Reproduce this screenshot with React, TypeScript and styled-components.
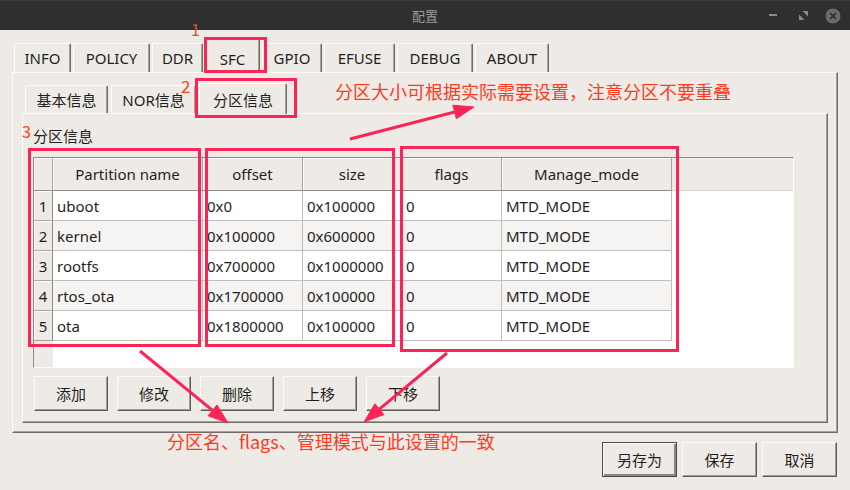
import styled, { createGlobalStyle } from 'styled-components';

const GlobalStyle = createGlobalStyle`
  html, body {
    margin: 0;
    padding: 0;
  }
  body {
    background: #eeebe6;
    font-family: "Noto Sans", "Noto Sans CJK SC", sans-serif;
    font-size: 15px;
    color: #1f1f1f;
  }
`;

const Window = styled.div`
  position: relative;
  width: 850px;
  height: 490px;
  display: flex;
  flex-direction: column;
  overflow: hidden;
  background: #eeebe6;
`;

const TitleBar = styled.div`
  flex: none;
  height: 30px;
  box-sizing: border-box;
  background: #2f2f2f;
  border-top: 1px solid #3a3a3a;
  display: grid;
  grid-template-columns: 1fr auto 1fr;
  align-items: center;
`;

const Title = styled.div`
  grid-column: 2;
  color: #9b9b9b;
  font-size: 13px;
  font-family: "Noto Sans CJK SC", sans-serif;
`;

const Controls = styled.div`
  justify-self: end;
  display: flex;
  padding-right: 2px;
`;

const ControlSlot = styled.div`
  width: 30px;
  height: 29px;
  display: flex;
  align-items: center;
  justify-content: center;
`;

const TabBar = styled.div`
  flex: none;
  margin-top: 8px;
  padding-left: 14px;
  height: 34px;
  display: flex;
  align-items: flex-end;
  gap: 2px;
`;

const Tab = styled.div<{ $w: number; $active?: boolean }>`
  box-sizing: border-box;
  width: ${({ $w }) => $w}px;
  height: ${({ $active }) => ($active ? 35 : 29)}px;
  margin-bottom: ${({ $active }) => ($active ? -1 : 0)}px;
  padding-top: ${({ $active }) => ($active ? 5 : 0)}px;
  position: relative;
  z-index: ${({ $active }) => ($active ? 2 : 0)};
  display: flex;
  align-items: center;
  justify-content: center;
  background: #eeebe6;
  border: 1px solid #fdfcfb;
  border-bottom: none;
  border-right-color: #6f6c69;
  box-shadow: inset -1px 0 #a5a29e;
  border-radius: 2px 2px 0 0;
`;

const Panel = styled.div`
  flex: none;
  margin: 0 12px;
  height: 361px;
  box-sizing: border-box;
  border: 1px solid;
  border-color: #fdfcfb #6f6c69 #6f6c69 #fdfcfb;
  box-shadow: inset -1px -1px #a5a29e;
  padding: 10px 9px 9px 9px;
  display: flex;
  flex-direction: column;
`;

const SubTabBar = styled.div`
  height: 30px;
  padding-left: 3px;
  display: flex;
  align-items: flex-end;
  gap: 3px;
`;

const SubTab = styled(Tab)`
  height: ${({ $active }) => ($active ? 31 : 28)}px;
  padding-top: ${({ $active }) => ($active ? 1 : 0)}px;
`;

const InnerPanel = styled.div`
  height: 310px;
  box-sizing: border-box;
  border: 1px solid;
  border-color: #fdfcfb #6f6c69 #6f6c69 #fdfcfb;
  box-shadow: inset -1px -1px #a5a29e;
  padding: 12px 10px 11px 10px;
  display: flex;
  flex-direction: column;
`;

const GroupLabel = styled.div`
  line-height: 20px;
  height: 20px;
`;

const Grid = styled.div`
  margin-top: 11px;
  width: 761px;
  height: 211px;
  box-sizing: border-box;
  border: 1px solid;
  border-color: #8c8985 #fdfcfb #fdfcfb #8c8985;
  background: #fff;
  display: grid;
  grid-template-columns: 19px 150px 100px 99px 100px 170px 1fr;
  grid-template-rows: 33px repeat(5, 30px) 1fr;
`;

const HeadCell = styled.div`
  box-sizing: border-box;
  background: #eeebe6;
  border-right: 1px solid #a9a6a2;
  border-bottom: 1px solid #8f8c88;
  box-shadow: inset 1px 1px #fdfcfb;
  display: flex;
  align-items: center;
  justify-content: center;
  white-space: nowrap;
`;

const HeadFill = styled.div`
  background: #eeebe6;
  border-bottom: 1px solid #d6d3cf;
`;

const RowHead = styled.div`
  box-sizing: border-box;
  background: #eeebe6;
  border-right: 1px solid #8f8c88;
  border-bottom: 1px solid #a9a6a2;
  box-shadow: inset 1px 1px #fdfcfb;
  display: flex;
  align-items: center;
  justify-content: center;
  padding-top: 1px;
`;

const Cell = styled.div<{ $alt: boolean }>`
  box-sizing: border-box;
  background: ${({ $alt }) => ($alt ? '#f6f4f2' : '#ffffff')};
  border-right: 1px solid #c2bfbb;
  border-bottom: 1px solid #c2bfbb;
  padding: 0 0 0 4px;
  display: flex;
  align-items: center;
  white-space: nowrap;
`;

const Blank = styled.div``;

const HeadBlank = styled.div`
  background: #eeebe6;
`;

const ButtonRow = styled.div`
  margin-top: 8px;
  padding-left: 1px;
  display: flex;
  gap: 9px;
`;

const Button = styled.button<{ $default?: boolean }>`
  width: 75px;
  height: 35px;
  box-sizing: border-box;
  margin: 0;
  padding: 0;
  font: inherit;
  color: #1f1f1f;
  background: #eeebe6;
  border: 1px solid;
  border-color: ${({ $default }) =>
    $default ? '#4a4a4a' : '#fdfcfb #5f5d5a #5f5d5a #fdfcfb'};
  box-shadow: ${({ $default }) =>
    $default
      ? 'inset 1px 1px #fdfcfb, inset -2px -2px #8a8784'
      : 'inset -1px -1px #a19e9a'};
`;

const ToolButton = styled(Button)`
  width: 74px;
`;

const Footer = styled.div`
  margin-top: 9px;
  padding-right: 13px;
  display: flex;
  justify-content: flex-end;
  gap: 5px;
`;

const Overlay = styled.svg`
  position: absolute;
  left: 0;
  top: 0;
  pointer-events: none;
  z-index: 10;
`;

const Note = styled.span<{ $x: number; $y: number; $size: number; $color: string }>`
  position: absolute;
  left: ${({ $x }) => $x}px;
  top: ${({ $y }) => $y}px;
  font-family: "Noto Sans CJK SC", sans-serif;
  font-size: ${({ $size }) => $size}px;
  line-height: ${({ $size }) => $size}px;
  color: ${({ $color }) => $color};
  white-space: nowrap;
  z-index: 11;
`;

const TABS = [
  { label: 'INFO', w: 57 },
  { label: 'POLICY', w: 77 },
  { label: 'DDR', w: 51 },
  { label: 'SFC', w: 55, active: true },
  { label: 'GPIO', w: 60 },
  { label: 'EFUSE', w: 71 },
  { label: 'DEBUG', w: 76 },
  { label: 'ABOUT', w: 74 },
];

const SUB_TABS = [
  { label: '基本信息', w: 83 },
  { label: 'NOR信息', w: 85 },
  { label: '分区信息', w: 88, active: true },
];

const COLUMNS = ['Partition name', 'offset', 'size', 'flags', 'Manage_mode'];

const ROWS = [
  ['uboot', '0x0', '0x100000', '0', 'MTD_MODE'],
  ['kernel', '0x100000', '0x600000', '0', 'MTD_MODE'],
  ['rootfs', '0x700000', '0x1000000', '0', 'MTD_MODE'],
  ['rtos_ota', '0x1700000', '0x100000', '0', 'MTD_MODE'],
  ['ota', '0x1800000', '0x100000', '0', 'MTD_MODE'],
];

const TOOL_BUTTONS = ['添加', '修改', '删除', '上移', '下移'];

const BOX = '#fb2456';
const TEXT_RED = '#ff3a1f';
const NUM_RED = '#f2461c';

function Arrow({ x1, y1, x2, y2 }: { x1: number; y1: number; x2: number; y2: number }) {
  const dx = x2 - x1;
  const dy = y2 - y1;
  const len = Math.hypot(dx, dy);
  const ux = dx / len;
  const uy = dy / len;
  const bx = x2 - ux * 20;
  const by = y2 - uy * 20;
  const px = -uy * 7;
  const py = ux * 7;
  return (
    <g fill={BOX} stroke={BOX}>
      <line x1={x1} y1={y1} x2={bx} y2={by} strokeWidth={3} />
      <polygon
        points={`${x2},${y2} ${bx + px},${by + py} ${bx - px},${by - py}`}
        strokeWidth={1}
        strokeLinejoin="round"
      />
    </g>
  );
}

export default function App() {
  return (
    <Window>
      <GlobalStyle />
      <TitleBar>
        <Title>配置</Title>
        <Controls>
          <ControlSlot>
            <svg width="8" height="3">
              <rect x="0" y="0" width="8" height="2" fill="#8a8a8a" />
            </svg>
          </ControlSlot>
          <ControlSlot>
            <svg width="9" height="9" viewBox="0 0 9 9">
              <path d="M3.5 0H9V5.5Z M0 3.5V9H5.5Z" fill="#8a8a8a" />
            </svg>
          </ControlSlot>
          <ControlSlot>
            <svg width="16" height="16" viewBox="0 0 16 16">
              <circle cx="8" cy="8" r="7.5" fill="#6b6b6b" />
              <path d="M5.2 5.2L10.8 10.8M10.8 5.2L5.2 10.8" stroke="#2f2f2f" strokeWidth="1.8" />
            </svg>
          </ControlSlot>
        </Controls>
      </TitleBar>

      <TabBar>
        {TABS.map((t) => (
          <Tab key={t.label} $w={t.w} $active={t.active}>
            {t.label}
          </Tab>
        ))}
      </TabBar>

      <Panel>
        <SubTabBar>
          {SUB_TABS.map((t) => (
            <SubTab key={t.label} $w={t.w} $active={t.active}>
              {t.label}
            </SubTab>
          ))}
        </SubTabBar>
        <InnerPanel>
          <GroupLabel>分区信息</GroupLabel>
          <Grid>
            <HeadCell />
            {COLUMNS.map((c) => (
              <HeadCell key={c}>{c}</HeadCell>
            ))}
            <HeadFill />
            {ROWS.map((row, i) => (
              <>
                <RowHead key={`h${i}`}>{i + 1}</RowHead>
                {row.map((v, j) => (
                  <Cell key={`${i}-${j}`} $alt={i % 2 === 1}>
                    {v}
                  </Cell>
                ))}
                <Blank key={`b${i}`} />
              </>
            ))}
            <HeadBlank />
          </Grid>
          <ButtonRow>
            {TOOL_BUTTONS.map((b) => (
              <ToolButton key={b}>{b}</ToolButton>
            ))}
          </ButtonRow>
        </InnerPanel>
      </Panel>

      <Footer>
        <Button $default>另存为</Button>
        <Button>保存</Button>
        <Button>取消</Button>
      </Footer>

      <Overlay width="850" height="490" viewBox="0 0 850 490">
        <g fill="none" stroke={BOX} strokeWidth={3}>
          <rect x={205.5} y={38.5} width={60} height={33} />
          <rect x={196.5} y={79.5} width={99} height={37} />
          <rect x={29.5} y={149.5} width={170} height={196} />
          <rect x={206.5} y={149.5} width={187} height={196} />
          <rect x={401.5} y={147.5} width={276} height={203} />
        </g>
        <Arrow x1={350} y1={139} x2={474} y2={107} />
        <Arrow x1={140} y1={351} x2={228} y2={423} />
        <Arrow x1={447} y1={353} x2={364} y2={422} />
      </Overlay>

      <Note $x={191} $y={21} $size={16} $color={NUM_RED}>1</Note>
      <Note $x={181} $y={77} $size={17} $color={NUM_RED}>2</Note>
      <Note $x={22} $y={123} $size={16} $color={NUM_RED}>3</Note>
      <Note $x={335} $y={82} $size={18} $color={TEXT_RED}>
        分区大小可根据实际需要设置，注意分区不要重叠
      </Note>
      <Note $x={167} $y={432} $size={18} $color={TEXT_RED}>
        分区名、flags、管理模式与此设置的一致
      </Note>
    </Window>
  );
}
